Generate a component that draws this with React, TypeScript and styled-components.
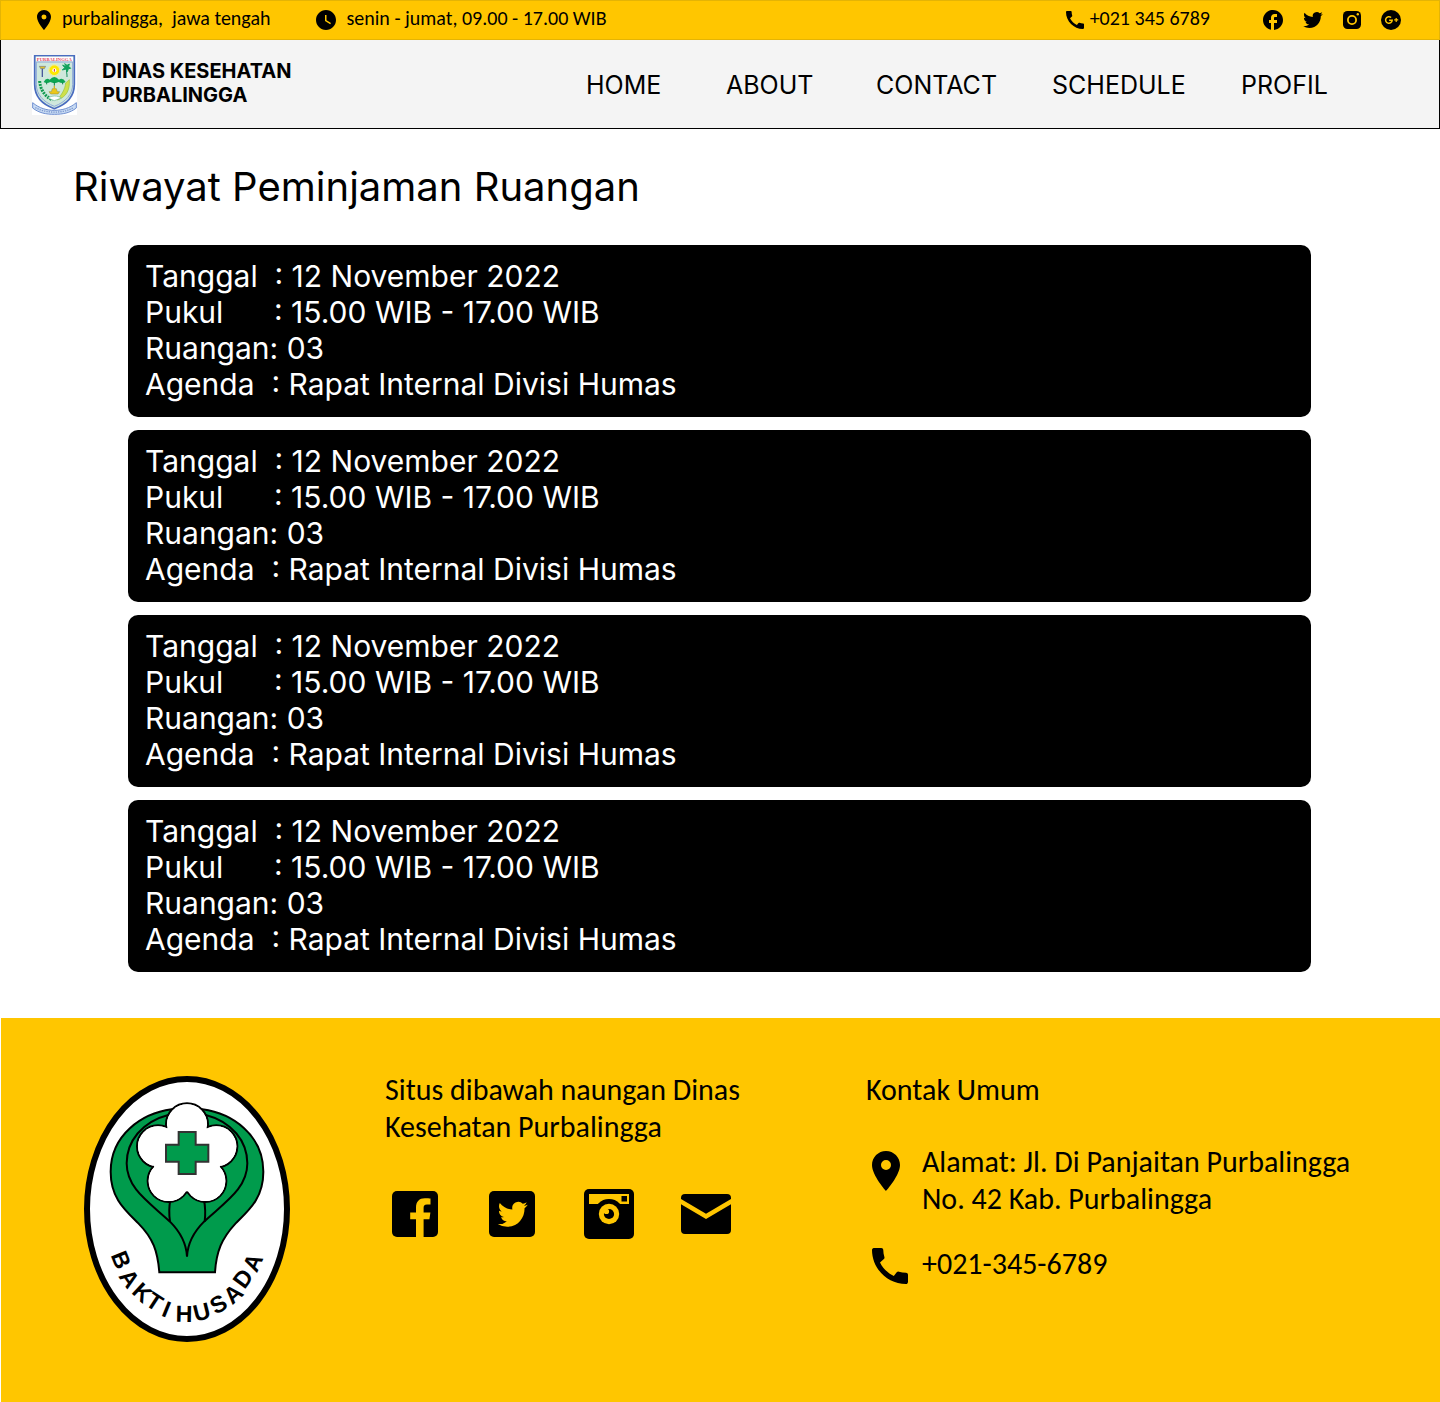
import React from "react";
import styled, { createGlobalStyle } from "styled-components";

const yellow = "#ffc600";
const humanist = `Carlito, Calibri, Lato, sans-serif`;

const GlobalStyle = createGlobalStyle`
  *, *::before, *::after { box-sizing: border-box; }
  body { margin: 0; background: #fff; color: #000; font-family: Inter, sans-serif; }
  a { color: inherit; text-decoration: none; }
  h1, h2, p, ul, address { margin: 0; padding: 0; font-size: inherit; font-weight: 400; font-style: normal; }
  ul { list-style: none; }
  svg { display: block; flex: none; }
`;

const TopBar = styled.div`
  display: flex;
  align-items: center;
  height: 40px;
  padding: 0 38px 0 36px;
  background: ${yellow};
  border: 1px solid #e4b405;
  font: 20px/24px ${humanist};
  white-space: pre;
`;

const TopItem = styled.span<{ $gap: number; $after: number }>`
  display: flex;
  align-items: center;
  gap: ${(p) => p.$gap}px;
  margin-right: ${(p) => p.$after}px;
`;

const TopText = styled.span`
  padding-bottom: 4px;
`;

const TopContact = styled.div`
  display: flex;
  align-items: center;
  margin-left: auto;
`;

const SocialLinks = styled.ul<{ $gap: number }>`
  display: flex;
  align-items: center;
  gap: ${(p) => p.$gap}px;
`;

const SocialCell = styled.a`
  display: grid;
  place-items: center;
  width: 50px;
  height: 50px;
`;

const Header = styled.header`
  display: flex;
  align-items: center;
  justify-content: space-between;
  height: 89px;
  padding: 2px 48px 0 31px;
  background: #f4f4f4;
  border: 1px solid #000;
  border-top: 0;
`;

const Brand = styled.a`
  display: flex;
  align-items: center;
  gap: 25px;
  font-size: 20px;
  font-weight: 700;
  line-height: 24px;
`;

const BrandName = styled.span`
  display: block;
  padding-bottom: 4px;
`;

const Nav = styled.nav`
  display: grid;
  grid-template-columns: 140px 150px 176px 189px 150px;
  font-size: 25px;
  line-height: 30px;
`;

const Main = styled.main`
  padding: 34px 129px 46px 128px;
`;

const Title = styled.h1`
  margin: 0 0 34px -55px;
  font-size: 40px;
  line-height: 48px;
`;

const History = styled.ul`
  display: flex;
  flex-direction: column;
  gap: 13px;
`;

const Booking = styled.li`
  padding: 13px 17px 15px;
  border-radius: 10px;
  background: #000;
  color: #fff;
  font-size: 30px;
  line-height: 36px;
  white-space: pre;
`;

const Footer = styled.footer`
  display: grid;
  grid-template-columns: 301px 481px 1fr;
  align-items: start;
  min-height: 384px;
  margin-left: 1px;
  padding: 53px 48px 53px 83px;
  background: ${yellow};
  font: 30px/37px ${humanist};
`;

const LogoBox = styled.div`
  padding-top: 5px;
`;

const Sites = styled.section`
  display: grid;
  gap: 44px;
`;

const SiteLinks = styled.div`
  padding-left: 5px;
`;

const Contact = styled.address`
  display: grid;
  gap: 28px;
  padding: 35px 0 0 6px;
`;

const ContactRow = styled.div<{ $iconTop: number }>`
  display: grid;
  grid-template-columns: 36px 1fr;
  align-items: start;
  gap: 14px;
  svg { margin-top: ${(p) => p.$iconTop}px; }
`;

const BIRD =
  "M23.953 4.57a10 10 0 01-2.825.775 4.958 4.958 0 002.163-2.723c-.951.555-2.005.959-3.127 1.184a4.92 4.92 0 00-8.384 4.482C7.69 8.095 4.067 6.13 1.64 3.162a4.822 4.822 0 00-.666 2.475c0 1.71.87 3.213 2.188 4.096a4.904 4.904 0 01-2.228-.616v.06a4.923 4.923 0 003.946 4.827 4.996 4.996 0 01-2.212.085 4.936 4.936 0 004.604 3.417 9.867 9.867 0 01-6.102 2.105c-.39 0-.779-.023-1.17-.067a13.995 13.995 0 007.557 2.209c9.053 0 13.998-7.496 13.998-13.985 0-.21 0-.42-.015-.63A9.935 9.935 0 0024 4.59z";

const Pin = ({ h }: { h: number }) => (
  <svg width={h * 0.7} height={h} viewBox="5 2 14 20" aria-hidden="true">
    <path d="M12 2C8.13 2 5 5.13 5 9c0 5.25 7 13 7 13s7-7.75 7-13c0-3.87-3.13-7-7-7zm0 9.5a2.5 2.5 0 010-5 2.5 2.5 0 010 5z" />
  </svg>
);

const Phone = ({ s }: { s: number }) => (
  <svg width={s} height={s} viewBox="3 3 18 18" aria-hidden="true">
    <path d="M20.01 15.38c-1.23 0-2.42-.2-3.53-.56a.977.977 0 00-1.01.24l-1.57 1.97c-2.83-1.35-5.48-3.9-6.89-6.83l1.95-1.66c.27-.28.35-.67.24-1.02-.37-1.11-.56-2.3-.56-3.53 0-.54-.45-.99-.99-.99H4.19C3.65 3 3 3.24 3 3.99 3 13.28 10.73 21 20.01 21c.71 0 .99-.63.99-1.18v-3.45c0-.54-.45-.99-.99-.99z" />
  </svg>
);

const Clock = () => (
  <svg width="20" height="20" viewBox="2 2 20 20" aria-hidden="true">
    <path d="M12 2C6.5 2 2 6.5 2 12s4.5 10 10 10 10-4.5 10-10S17.5 2 12 2zm4.2 14.2L11 13V7h1.5v5.2l4.5 2.7-.8 1.3z" />
  </svg>
);

const FacebookRound = () => (
  <svg width="20" height="20" viewBox="2 2 20 20" aria-hidden="true">
    <path d="M22 12c0-5.52-4.48-10-10-10S2 6.48 2 12c0 4.84 3.44 8.87 8 9.8V15H8v-3h2V9.5C10 7.57 11.57 6 13.5 6H16v3h-2c-.55 0-1 .45-1 1v2h3v3h-3v6.95c5.05-.5 9-4.76 9-9.95z" />
  </svg>
);

const Bird = () => (
  <svg width="20" height="18" viewBox="0 1 24 22" aria-hidden="true">
    <path d={BIRD} />
  </svg>
);

const InstagramSmall = () => (
  <svg width="18" height="18" viewBox="0 0 18 18" aria-hidden="true">
    <rect width="18" height="18" rx="4.5" />
    <circle cx="9" cy="9" r="4.1" fill="none" stroke={yellow} strokeWidth="1.8" />
    <circle cx="14.8" cy="3.2" r="1.2" fill={yellow} />
  </svg>
);

const GooglePlus = () => (
  <svg width="20" height="20" viewBox="0 0 20 20" aria-hidden="true">
    <circle cx="10" cy="10" r="10" />
    <path
      d="M10.1 7.5A3.3 3.3 0 1 0 11.2 10.2H8.1"
      fill="none"
      stroke={yellow}
      strokeWidth="1.5"
    />
    <path d="M13.2 9.3h1.4V7.9h1.2v1.4h1.4v1.2h-1.4v1.4h-1.2v-1.4h-1.4z" fill={yellow} />
  </svg>
);

const FacebookSquare = () => (
  <svg width="46" height="46" viewBox="0 0 46 46" aria-hidden="true">
    <rect width="46" height="46" rx="5" />
    <path
      d="M24 46V28.2H18.2V21.6H24V16.5C24 10.5 27.4 7.2 32.8 7.2 35.2 7.2 37.4 7.3 38.5 7.5V13.5H35C32.2 13.5 31.6 14.8 31.6 17V21.6H38.4L37.4 28.2H31.6V46Z"
      fill={yellow}
    />
  </svg>
);

const TwitterSquare = () => (
  <svg width="46" height="46" viewBox="0 0 46 46" aria-hidden="true">
    <rect width="46" height="46" rx="5" />
    <path d={BIRD} fill={yellow} transform="translate(8.8 8) scale(1.24 1.28)" />
  </svg>
);

const Camera = () => (
  <svg width="50" height="50" viewBox="0 0 50 50" aria-hidden="true">
    <rect width="50" height="50" rx="5" />
    <path d="M5 5H45V15H5Z" fill={yellow} />
    <rect x="37.5" y="7" width="5.5" height="5.5" />
    <circle cx="25" cy="25" r="15" />
    <circle cx="25" cy="25" r="10.2" fill={yellow} />
    <circle cx="25" cy="25" r="5.1" />
    <circle cx="22.4" cy="22.4" r="2.7" fill={yellow} />
  </svg>
);

const Envelope = () => (
  <svg width="50" height="40" viewBox="0 0 50 40" aria-hidden="true">
    <path d="M0 5V4Q0 0 4 0H46Q50 0 50 4V5L25 19.8Z" />
    <path d="M0 10.2L25 25 50 10.2V36Q50 40 46 40H4Q0 40 0 36Z" />
  </svg>
);

const Emblem = () => (
  <svg width="45" height="60" viewBox="0 0 135 180" role="img" aria-label="Lambang Purbalingga">
    <rect width="135" height="180" fill="#fff" />
    <path
      d="M2 143C22 160 44 166 67 166S113 160 133 143V159C114 174 92 178 67 178S21 174 2 159Z"
      fill="#c8dbf3"
      stroke="#6f8fd0"
      strokeWidth="3"
    />
    <path d="M10 158C45 176 90 176 125 158" fill="none" stroke="#7c98cf" strokeWidth="4" strokeDasharray="4 3" />
    <path
      d="M8 2H127V88C127 122 105 148 67 161C29 148 8 122 8 88Z"
      fill="#cfe8dc"
      stroke="#4a6cc0"
      strokeWidth="5"
    />
    <path d="M12 5H123V19H12Z" fill="#fff" />
    <text x="67" y="17" textAnchor="middle" fontFamily="Liberation Serif, serif" fontWeight="700" fontSize="14" fill="#e3405c">
      PURBALINGGA
    </text>
    <path d="M13 21H122V88C122 118 101 141 67 154C34 141 13 118 13 88Z" fill="none" stroke="#8fa8da" strokeWidth="3" />
    <circle cx="67" cy="46" r="15" fill="#ffe800" />
    <circle cx="67" cy="46" r="17" fill="none" stroke="#fff27a" strokeWidth="4" strokeDasharray="3 3" />
    <circle cx="67" cy="46" r="6" fill="#fff" />
    <path d="M67 42V50" stroke="#e02020" strokeWidth="3" />
    <path d="M31 40V66" stroke="#4a5a9c" strokeWidth="4" />
    <path d="M22 34H41L37 41H26Z" fill="#dfc22c" stroke="#54619a" strokeWidth="1.5" />
    <path d="M104 40C102 50 106 58 105 66" fill="none" stroke="#15905c" strokeWidth="3" />
    <path
      d="M104 36L92 30 98 38 91 45 102 42 106 50 109 41 116 40 110 34 112 27 105 31 98 26Z"
      fill="#12a25c"
      stroke="#12a25c"
      strokeWidth="3"
    />
    <path d="M35 81Q43 66 53 74Q67 58 81 74Q92 66 101 81Q91 87 80 81Q67 88 55 81Q44 87 35 81Z" fill="#0da653" />
    <path d="M44 82V88M67 82V92M92 82V88" stroke="#0b8247" strokeWidth="3" />
    <path d="M61 101H73L76 110H83L78 117H56L51 110H58Z" fill="#ecc719" stroke="#8d8a36" strokeWidth="1.5" />
    <path d="M67 93V101" stroke="#d9b318" strokeWidth="4" />
    <path d="M112 74C114 105 104 125 76 135C88 119 99 104 101 84Z" fill="#cfe04a" stroke="#9cc23a" strokeWidth="2" />
    <path d="M23 78C25 104 38 124 62 135" fill="none" stroke="#109a50" strokeWidth="9" strokeDasharray="6 3" />
    <path d="M48 129C60 121 76 121 88 129L67 137Z" fill="#fff" stroke="#6bb894" strokeWidth="2" />
  </svg>
);

/* Curved lettering of the seal: glyph, centre x, centre y, angle, advance (em). */
const SEAL_LETTERS: [string, number, number, number, number][] = [
  ["B", 139, 584, 68, 0.72],
  ["A", 164, 640, 55, 0.72],
  ["K", 203, 682, 43, 0.72],
  ["T", 239, 709, 33, 0.61],
  ["I", 275, 732, 22, 0.28],
  [" ", 300, 744, 10, 0.28],
  ["H", 327, 746, 1, 0.72],
  ["U", 380, 740, -14, 0.72],
  ["S", 430, 717, -29, 0.67],
  ["A", 474, 686, -42, 0.72],
  ["D", 503, 640, -54, 0.72],
  ["A", 533, 592, -66, 0.72],
];
const SEAL_SIZE = 70;

const sealGlyphs = SEAL_LETTERS.map(([, cx, cy, deg, adv]) => {
  const a = (deg * Math.PI) / 180;
  const w = (adv * SEAL_SIZE) / 2;
  const h = 25;
  return { x: cx - w * Math.cos(a) - h * Math.sin(a), y: cy - w * Math.sin(a) + h * Math.cos(a), deg };
});

const PETALS = [
  [336, 178],
  [249, 244],
  [424, 244],
  [281, 348],
  [391, 348],
];

const BaktiHusada = () => (
  <svg width="206" height="266" viewBox="27 33 618 798" role="img" aria-label="Bakti Husada">
    <ellipse cx="336" cy="432" rx="300" ry="390" fill="#fff" stroke="#000" strokeWidth="18" />
    <g fill="#009b4c" stroke="#000" strokeWidth="6">
      <path d="M290 133C200 145 107 210 107 320C107 400 150 435 190 475C235 520 248 560 253 622H420C424 560 440 520 482 475C522 435 565 400 565 320C565 210 472 145 382 133Z" />
      <g fill="none">
        <path d="M282 149C200 170 155 230 155 295C155 370 220 410 285 470C315 500 334 535 336 575C338 535 357 500 387 470C452 410 517 370 517 295C517 230 472 170 390 149" />
        <path d="M286 405Q280 435 285 470M387 405Q393 435 389 470" />
      </g>
    </g>
    {PETALS.map(([cx, cy]) => (
      <circle key={`o${cx}`} cx={cx} cy={cy} r="63" fill="#fff" stroke="#000" strokeWidth="6" />
    ))}
    {PETALS.map(([cx, cy]) => (
      <circle key={`i${cx}`} cx={cx} cy={cy} r="60" fill="#fff" />
    ))}
    <path d="M276 190H396L435 305 336 380 237 305Z" fill="#fff" />
    <path
      d="M311 201H362V239H400V290H362V327H311V290H273V239H311Z"
      fill="#009b4c"
      stroke="#333"
      strokeWidth="6"
    />
    <text
      x={sealGlyphs.map((g) => g.x).join(" ")}
      y={sealGlyphs.map((g) => g.y).join(" ")}
      rotate={sealGlyphs.map((g) => g.deg).join(" ")}
      fontFamily="Liberation Sans, Arial, sans-serif"
      fontWeight="700"
      fontSize={SEAL_SIZE}
    >
      {SEAL_LETTERS.map(([ch]) => ch).join("")}
    </text>
  </svg>
);

const navItems = ["HOME", "ABOUT", "CONTACT", "SCHEDULE", "PROFIL"];

const topSocial = [
  { name: "Facebook", icon: <FacebookRound /> },
  { name: "Twitter", icon: <Bird /> },
  { name: "Instagram", icon: <InstagramSmall /> },
  { name: "Google Plus", icon: <GooglePlus /> },
];

const siteSocial = [
  { name: "Facebook", icon: <FacebookSquare /> },
  { name: "Twitter", icon: <TwitterSquare /> },
  { name: "Instagram", icon: <Camera /> },
  { name: "Email", icon: <Envelope /> },
];

const bookings = Array.from({ length: 4 }, (_, id) => ({
  id,
  tanggal: "12 November 2022",
  pukul: "15.00 WIB - 17.00 WIB",
  ruangan: "03",
  agenda: "Rapat Internal Divisi Humas",
}));

export default function App() {
  return (
    <>
      <GlobalStyle />
      <TopBar>
        <TopItem $gap={11} $after={45}>
          <Pin h={20} />
          <TopText>{"purbalingga,  jawa tengah"}</TopText>
        </TopItem>
        <TopItem $gap={11} $after={0}>
          <Clock />
          <TopText>senin - jumat, 09.00 - 17.00 WIB</TopText>
        </TopItem>
        <TopContact>
          <TopItem $gap={6} $after={53}>
            <Phone s={18} />
            <TopText>+021 345 6789</TopText>
          </TopItem>
          <SocialLinks $gap={20}>
            {topSocial.map((s) => (
              <li key={s.name}>
                <a href="#" aria-label={s.name}>{s.icon}</a>
              </li>
            ))}
          </SocialLinks>
        </TopContact>
      </TopBar>
      <Header>
        <Brand href="#">
          <Emblem />
          <BrandName>
            DINAS KESEHATAN
            <br />
            PURBALINGGA
          </BrandName>
        </Brand>
        <Nav>
          {navItems.map((item) => (
            <a key={item} href="#">{item}</a>
          ))}
        </Nav>
      </Header>
      <Main>
        <Title>Riwayat Peminjaman Ruangan</Title>
        <History>
          {bookings.map((b) => (
            <Booking key={b.id}>
              <p>{`Tanggal  : ${b.tanggal}`}</p>
              <p>{`Pukul      : ${b.pukul}`}</p>
              <p>{`Ruangan: ${b.ruangan}`}</p>
              <p>{`Agenda  : ${b.agenda}`}</p>
            </Booking>
          ))}
        </History>
      </Main>
      <Footer>
        <LogoBox>
          <BaktiHusada />
        </LogoBox>
        <Sites>
          <h2>
            Situs dibawah naungan Dinas
            <br />
            Kesehatan Purbalingga
          </h2>
          <SiteLinks>
            <SocialLinks $gap={47}>
              {siteSocial.map((s) => (
                <li key={s.name}>
                  <SocialCell href="#" aria-label={s.name}>{s.icon}</SocialCell>
                </li>
              ))}
            </SocialLinks>
          </SiteLinks>
        </Sites>
        <section>
          <h2>Kontak Umum</h2>
          <Contact>
            <ContactRow $iconTop={8}>
              <Pin h={40} />
              <p>
                Alamat: Jl. Di Panjaitan Purbalingga
                <br />
                No. 42 Kab. Purbalingga
              </p>
            </ContactRow>
            <ContactRow $iconTop={3}>
              <Phone s={36} />
              <a href="tel:+0213456789">+021-345-6789</a>
            </ContactRow>
          </Contact>
        </section>
      </Footer>
    </>
  );
}
